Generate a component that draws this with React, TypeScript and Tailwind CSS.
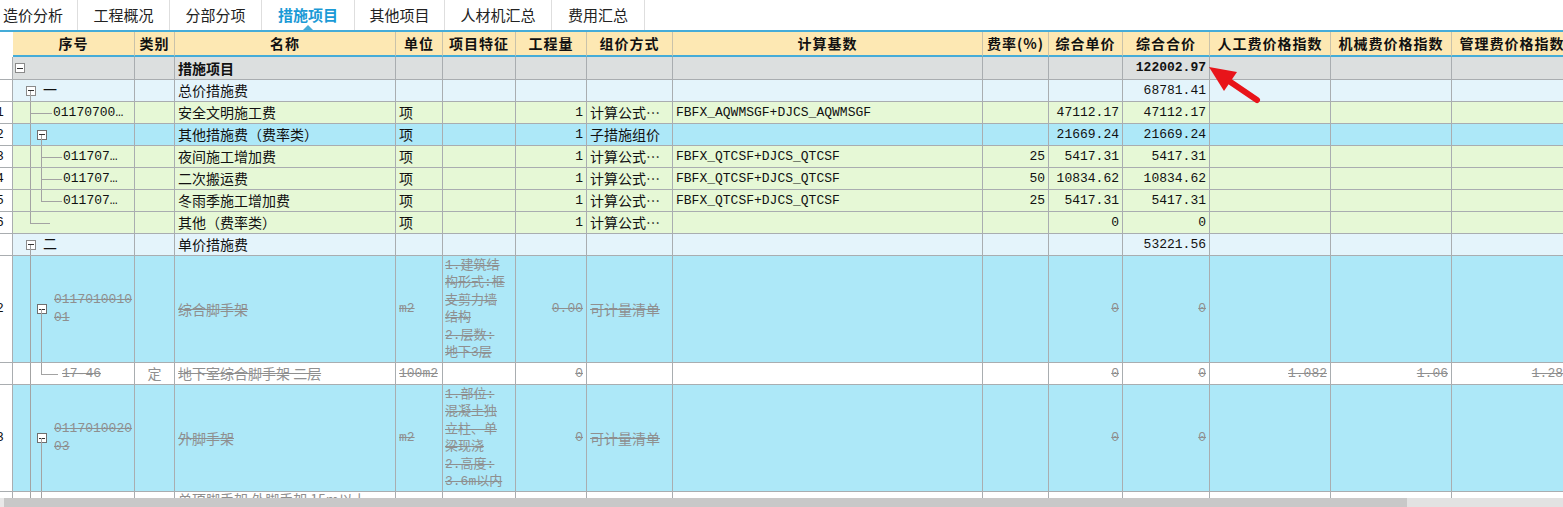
import React from "react";

const GRID =
  "grid grid-cols-[13px_122px_40px_221px_47px_73px_71px_86px_310px_66px_74px_87px_121px_121px_121px]";
const CN = "font-['Noto_Sans_CJK_SC',sans-serif]";
const MONO = "font-['Liberation_Mono','Noto_Sans_CJK_SC',monospace]";
const LN = "border-[#a9adb0]";
const STRIKE = "text-[#8f8f8f] line-through decoration-[#8f8f8f]";
const BLACK = "text-[#111]";

const TREE: Record<string, string> = {
  v1: "absolute left-[17px] top-0 bottom-0 w-px bg-[#a3a3a3]",
  v1t: "absolute left-[17px] top-0 h-1/2 w-px bg-[#a3a3a3]",
  v1b: "absolute left-[17px] top-1/2 bottom-0 w-px bg-[#a3a3a3]",
  v2: "absolute left-[28px] top-0 bottom-0 w-px bg-[#a3a3a3]",
  v2t: "absolute left-[28px] top-0 h-1/2 w-px bg-[#a3a3a3]",
  v2b: "absolute left-[28px] top-1/2 bottom-0 w-px bg-[#a3a3a3]",
  h1: "absolute left-[17px] top-1/2 w-[22px] h-px bg-[#a3a3a3]",
  h1s: "absolute left-[17px] top-1/2 w-[20px] h-px bg-[#a3a3a3]",
  h2: "absolute left-[28px] top-1/2 w-[21px] h-px bg-[#a3a3a3]",
  h2s: "absolute left-[28px] top-1/2 w-[17px] h-px bg-[#a3a3a3]",
};

const BOX: Record<string, string> = {
  b0: "absolute left-[2px] top-1/2 -translate-y-1/2 w-[10px] h-[10px] border border-[#8a8a8a] bg-white flex items-center justify-center",
  b1: "absolute left-[13px] top-1/2 -translate-y-1/2 w-[10px] h-[10px] border border-[#8a8a8a] bg-white flex items-center justify-center",
  b2: "absolute left-[24px] top-1/2 -translate-y-1/2 w-[10px] h-[10px] border border-[#6f6f6f] bg-white flex items-center justify-center",
};

function Tree({ parts }: { parts: string[] }) {
  return (
    <>
      {parts.map((p) =>
        BOX[p] ? (
          <span key={p} className={BOX[p]}>
            <span className="block w-[6px] h-px bg-[#333]" />
          </span>
        ) : (
          <span key={p} className={TREE[p]} />
        )
      )}
    </>
  );
}

function Row({ h, bg, cells }: { h: string; bg: string; cells: React.ReactNode[] }) {
  return (
    <div className={`${GRID} ${h} border-b ${LN}`}>
      {cells.map((c, i) => (
        <div
          key={i}
          className={`relative flex items-center overflow-hidden border-r ${LN} ${i === 0 ? "bg-white" : bg}`}
        >
          {c}
        </div>
      ))}
    </div>
  );
}

const L = (t: React.ReactNode, s = false, extra = "") => (
  <span className={`${CN} w-full pl-[3px] text-[14px] whitespace-nowrap ${s ? STRIKE : BLACK} ${extra}`}>{t}</span>
);
const M = (t: React.ReactNode, s = false) => (
  <span className={`${MONO} w-full pl-[3px] text-[13px] whitespace-nowrap ${s ? STRIKE : BLACK}`}>{t}</span>
);
const R = (t: React.ReactNode, s = false, extra = "pr-[3px]") => (
  <span className={`${MONO} w-full text-right text-[13px] whitespace-nowrap ${s ? STRIKE : BLACK} ${extra}`}>
    {t}
  </span>
);
const Num = (t: string) => <span className={`${MONO} -ml-[4px] text-[13px] text-[#111]`}>{t}</span>;
const Code = (parts: string[], pl: string, t: React.ReactNode, s = false) => (
  <>
    <Tree parts={parts} />
    <span className={`${MONO} relative ${pl} text-[13px] whitespace-nowrap ${s ? STRIKE : BLACK}`}>{t}</span>
  </>
);
const E = null;

const headers = [
  "",
  "序号",
  "类别",
  "名称",
  "单位",
  "项目特征",
  "工程量",
  "组价方式",
  "计算基数",
  "费率(%)",
  "综合单价",
  "综合合价",
  "人工费价格指数",
  "机械费价格指数",
  "管理费价格指数",
];

const tabs = ["造价分析", "工程概况", "分部分项", "措施项目", "其他项目", "人材机汇总", "费用汇总"];
const tabW = ["w-[78px]", "w-[92px]", "w-[92px]", "w-[93px]", "w-[90px]", "w-[107px]", "w-[93px]"];

const GREEN = "bg-[#e6f8d6]";
const LBLUE = "bg-[#e4f4fb]";
const BLUE = "bg-[#ade8f8]";
const GREY = "bg-[#dcdfdf]";

function Feat({ lines }: { lines: string[] }) {
  return (
    <div className={`${MONO} w-full pl-[2px] text-[13px] leading-[17.5px] ${STRIKE}`}>
      {lines.map((l, i) => (
        <div key={i} className="whitespace-nowrap">
          {l}
        </div>
      ))}
    </div>
  );
}

function TallCode({ a, b }: { a: string; b: string }) {
  return (
    <>
      <Tree parts={["v1", "b2", "v2b"]} />
      <div className={`${MONO} relative pl-[41px] text-[13px] leading-[18px] ${STRIKE}`}>
        <div>{a}</div>
        <div>{b}</div>
      </div>
    </>
  );
}

export default function App() {
  return (
    <div className="relative w-[1563px] h-[507px] overflow-hidden bg-white">
      {/* Tabs */}
      <div className="flex h-[32px] border-b-2 border-[#45acd8]">
        {tabs.map((t, i) => (
          <div
            key={t}
            className={`${tabW[i]} relative flex items-center ${i === 0 ? "pl-[3px]" : "justify-center"} border-r border-[#dedede] ${CN} text-[15px] ${
              i === 3 ? "font-bold text-[#1b9ad6]" : "text-[#222]"
            }`}
          >
            {t}
            {i === 3 && (
              <span className="absolute bottom-0 left-1/2 -translate-x-1/2 w-0 h-0 border-l-[5px] border-r-[5px] border-b-[5px] border-l-transparent border-r-transparent border-b-[#45acd8]" />
            )}
          </div>
        ))}
      </div>

      {/* Header */}
      <div className={`${GRID} h-[25px]`}>
        {headers.map((h, i) => (
          <div
            key={i}
            className={
              i === 0
                ? "bg-white"
                : `flex items-center justify-center border-b-2 border-b-[#45acd8] border-r border-r-[#c9c2aa] bg-[#fde8b3] ${CN} font-bold text-[14px] tracking-[1px] text-[#111] whitespace-nowrap overflow-hidden`
            }
          >
            {h}
          </div>
        ))}
      </div>

      {/* Body */}
      <div className="h-[441px] overflow-hidden">
        <Row
          h="h-[23px]"
          bg={GREY}
          cells={[E, <Tree parts={["b0"]} />, E, L("措施项目", false, "font-bold"), E, E, E, E, E, E, E, R("122002.97", false, "pr-[3px] font-bold"), E, E, E]}
        />
        <Row
          h="h-[22px]"
          bg={LBLUE}
          cells={[
            E,
            Code(["b1", "v1b"], "pl-[30px]", <span className={CN + " text-[14px]"}>一</span>),
            E,
            L("总价措施费"),
            E, E, E, E, E, E, E,
            R("68781.41"),
            E, E, E,
          ]}
        />
        <Row
          h="h-[22px]"
          bg={GREEN}
          cells={[
            Num("1"),
            Code(["v1", "h1"], "pl-[40px]", "01170700…"),
            E,
            L("安全文明施工费"),
            L("项"),
            E,
            R("1"),
            L("计算公式…"),
            M("FBFX_AQWMSGF+DJCS_AQWMSGF"),
            E,
            R("47112.17"),
            R("47112.17"),
            E, E, E,
          ]}
        />
        <Row
          h="h-[22px]"
          bg={BLUE}
          cells={[
            Num("2"),
            <Tree parts={["v1", "b2", "v2b"]} />,
            E,
            L("其他措施费（费率类）"),
            L("项"),
            E,
            R("1"),
            L("子措施组价"),
            E,
            E,
            R("21669.24"),
            R("21669.24"),
            E, E, E,
          ]}
        />
        {[
          ["3", "夜间施工增加费", "25", "5417.31", ["v1", "v2", "h2"]],
          ["4", "二次搬运费", "50", "10834.62", ["v1", "v2", "h2"]],
          ["5", "冬雨季施工增加费", "25", "5417.31", ["v1", "v2t", "h2"]],
        ].map(([n, name, rate, price, parts]) => (
          <Row
            key={n as string}
            h="h-[22px]"
            bg={GREEN}
            cells={[
              Num(n as string),
              Code(parts as string[], "pl-[50px]", "011707…"),
              E,
              L(name as string),
              L("项"),
              E,
              R("1"),
              L("计算公式…"),
              M("FBFX_QTCSF+DJCS_QTCSF"),
              R(rate as string),
              R(price as string),
              R(price as string),
              E, E, E,
            ]}
          />
        ))}
        <Row
          h="h-[22px]"
          bg={GREEN}
          cells={[
            Num("6"),
            <Tree parts={["v1t", "h1s"]} />,
            E,
            L("其他（费率类）"),
            L("项"),
            E,
            R("1"),
            L("计算公式…"),
            E,
            E,
            R("0"),
            R("0"),
            E, E, E,
          ]}
        />
        <Row
          h="h-[22px]"
          bg={LBLUE}
          cells={[
            E,
            Code(["b1", "v1b"], "pl-[30px]", <span className={CN + " text-[14px]"}>二</span>),
            E,
            L("单价措施费"),
            E, E, E, E, E, E, E,
            R("53221.56"),
            E, E, E,
          ]}
        />
        {/* 综合脚手架 */}
        <Row
          h="h-[107px]"
          bg={BLUE}
          cells={[
            Num("2"),
            <TallCode a="0117010010" b="01" />,
            E,
            L("综合脚手架", true),
            M("m2", true),
            <Feat lines={["1.建筑结", "构形式:框", "支剪力墙", "结构", "2.层数:", "地下3层"]} />,
            R("0.00", true),
            L("可计量清单", true),
            E,
            E,
            R("0", true),
            R("0", true),
            E, E, E,
          ]}
        />
        {/* 17-46 */}
        <Row
          h="h-[22px]"
          bg="bg-white"
          cells={[
            E,
            Code(["v1", "v2t", "h2s"], "pl-[49px]", "17-46", true),
            <span className={`${CN} w-full text-center text-[14px] text-[#8f8f8f]`}>定</span>,
            L("地下室综合脚手架 二层", true),
            M("100m2", true),
            E,
            R("0", true),
            E,
            E,
            E,
            R("0", true),
            R("0", true),
            R("1.082", true),
            R("1.06", true),
            R("1.28", true, "pr-[9px]"),
          ]}
        />
        {/* 外脚手架 */}
        <Row
          h="h-[107px]"
          bg={BLUE}
          cells={[
            Num("3"),
            <TallCode a="0117010020" b="03" />,
            E,
            L("外脚手架", true),
            M("m2", true),
            <Feat lines={["1.部位:", "混凝土独", "立柱、单", "梁现浇", "2.高度:", "3.6m以内"]} />,
            R("0", true),
            L("可计量清单", true),
            E,
            E,
            R("0", true),
            R("0", true),
            E, E, E,
          ]}
        />
        <Row
          h="h-[22px]"
          bg="bg-white"
          cells={[
            E,
            <Tree parts={["v1", "v2"]} />,
            E,
            <span className={`${CN} w-full pl-[3px] text-[14px] text-[#8f8f8f] whitespace-nowrap -mt-[6px]`}>
              单项脚手架 外脚手架 15m以上
            </span>,
            E, E, E, E, E, E, E, E, E, E, E,
          ]}
        />
      </div>

      {/* Scrollbar */}
      <div className="flex h-[9px]">
        <div className="w-[4px] bg-[#e8e8e8]" />
        <div className="w-[1403px] bg-[#c8c8c8]" />
        <div className="flex-1 bg-[#e2e2e2]" />
      </div>

      {/* Red arrow */}
      <svg className="absolute left-[1200px] top-[60px]" width="66" height="46" viewBox="0 0 66 46">
        <polygon points="9,7 24,31 37,12" fill="#e8141a" />
        <line x1="29" y1="21" x2="57" y2="40" stroke="#e8141a" strokeWidth="6" strokeLinecap="round" />
      </svg>
    </div>
  );
}
